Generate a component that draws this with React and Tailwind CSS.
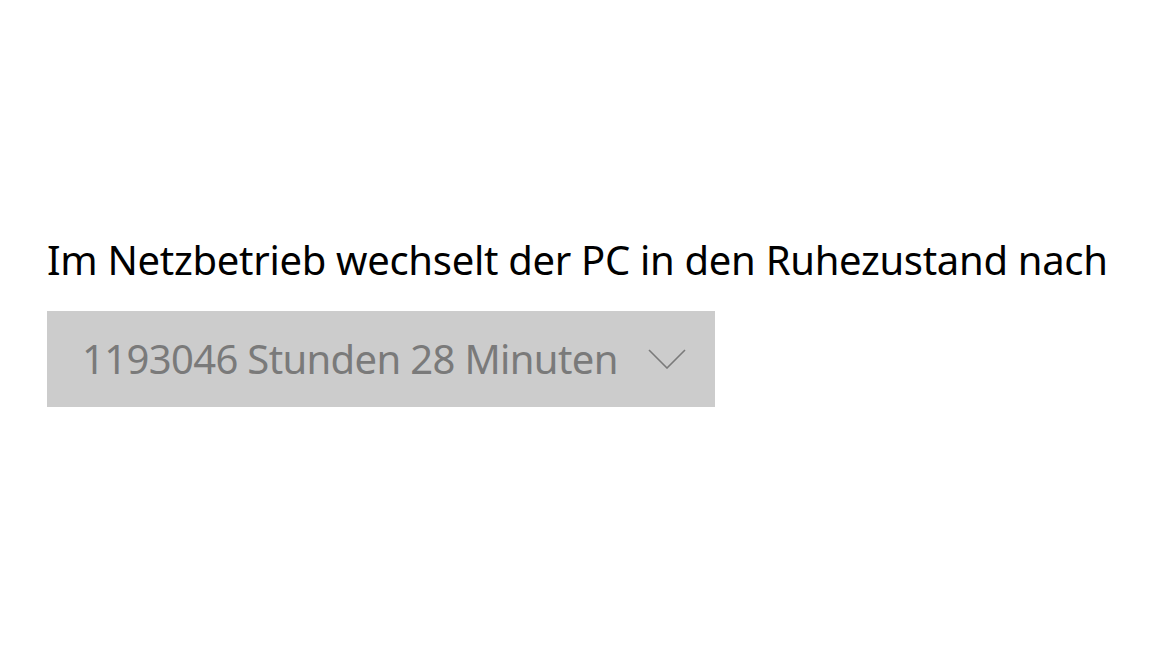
export default function App() {
  return (
    <div className="w-[1155px] h-[650px] bg-white pt-[234px] pl-[47px]" style={{ fontFamily: "'Noto Sans', 'Open Sans', sans-serif" }}>
      <p className="text-[40px] leading-[52px] text-black tracking-[-0.3px] whitespace-nowrap">
        Im Netzbetrieb wechselt der PC in den Ruhezustand nach
      </p>
      <div className="mt-[25px] w-[668px] h-[96px] bg-[#cccccc] flex items-center pl-[35px]">
        <span className="whitespace-nowrap text-[40px] text-[#7a7a7a] tracking-[-0.65px] leading-none">1193046 Stunden 28 Minuten</span>
        <svg className="ml-auto mr-[29px] shrink-0" width="38" height="20" viewBox="0 0 38 20" fill="none">
          <path d="M1 1 L19 19 L37 1" stroke="#7a7a7a" strokeWidth="1.6" />
        </svg>
      </div>
    </div>
  );
}
